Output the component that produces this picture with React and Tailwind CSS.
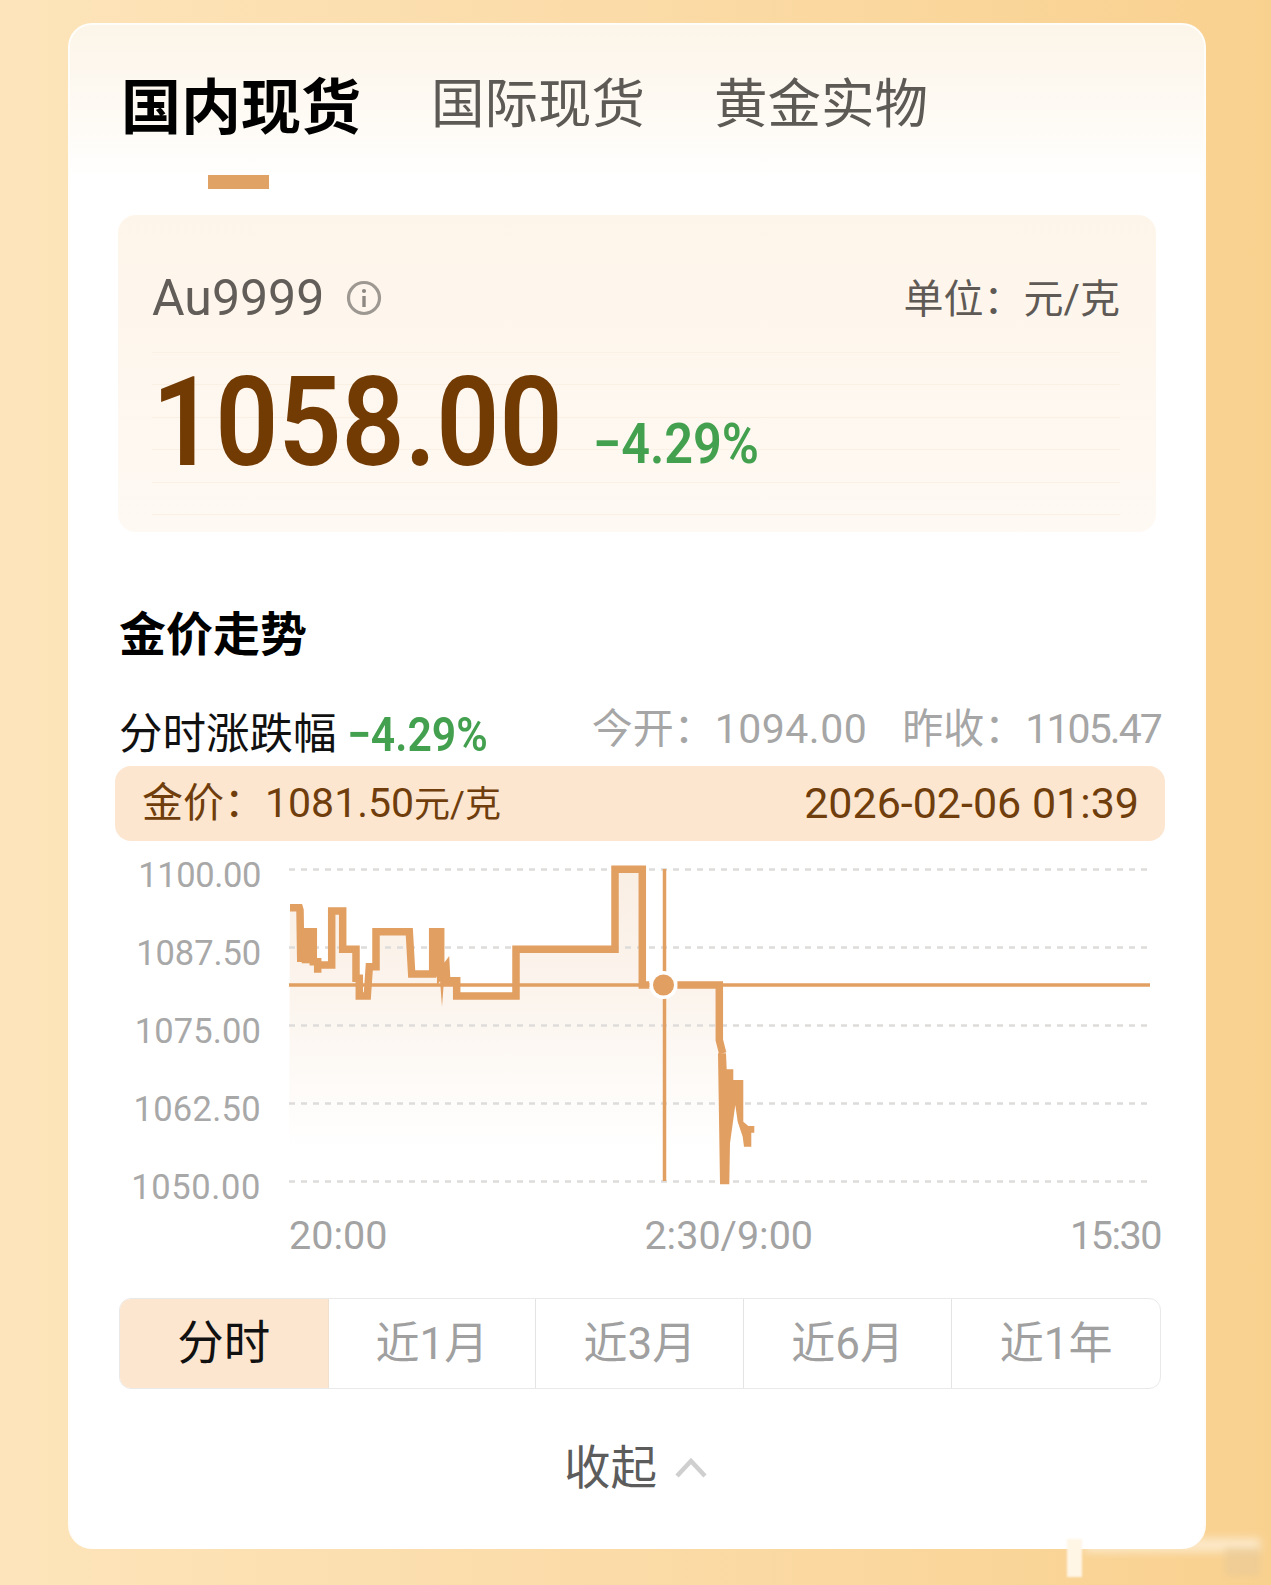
const FONT = "font-['Roboto','Noto_Sans_CJK_SC',sans-serif]";

const z4 = ([x, y]) => [270 + x / 3, 850 + y / 3];
const z5 = ([x, y]) => [590 + x / 3, 850 + y / 3];
const toD = (pts) => pts.map((p, i) => `${i ? "L" : "M"}${p[0].toFixed(1)} ${p[1].toFixed(1)}`).join(" ");

const left = [[60,173],[88,173],[90,180],[92,325],[106,325],[106,245],[130,245],[130,335],[143,335],[143,368],[143,345],[185,345],[185,183],[218,183],[218,298],[258,298],[258,385],[268,385],[268,438],[292,438],[298,350],[318,350],[318,245],[418,245],[425,372],[488,372],[488,245],[512,245],[512,372],[528,350],[530,392],[560,392],[560,438],[738,438],[738,298]].map(z4);
const mid = [[75,298],[75,58],[157,58],[157,405],[178,405]].map(z5);
const right = [[262,405],[388,405],[388,570],[398,610]].map(z5);
const fall = [[384,610],[408,610],[410,658],[430,658],[430,690],[460,690],[460,815],[475,828],[493,828],[493,848],[484,848],[484,890],[462,890],[458,860],[443,815],[436,765],[420,880],[418,1003],[390,1003]].map(z5);
const block1 = [[478,240],[522,240],[522,380],[478,380]].map(z4);
const block2 = [[95,240],[140,240],[140,340],[95,340]].map(z4);
const spike = [[509,378],[523,378],[516,470]].map(z4);
const area = [...left, ...mid, ...right, [718, 1181], [289, 1181]];

function Chart() {
  const grid = [869.5, 947.5, 1025.5, 1103.5, 1181.5];
  return (
    <svg width="905" height="360" viewBox="261 850 905 360" className="block shrink-0">
      <defs>
        <linearGradient id="fade" gradientUnits="userSpaceOnUse" x1="0" y1="869" x2="0" y2="1150">
          <stop offset="0" stopColor="#e09e5f" stopOpacity="0.17" />
          <stop offset="0.45" stopColor="#e09e5f" stopOpacity="0.11" />
          <stop offset="1" stopColor="#e09e5f" stopOpacity="0" />
        </linearGradient>
      </defs>
      <path d={toD(area) + " Z"} fill="url(#fade)" />
      {grid.map((y) => (
        <line key={y} x1="289" x2="1147" y1={y} y2={y} stroke="#dedcda" strokeWidth="2.5" strokeDasharray="6 6" />
      ))}
      <line x1="289" x2="1150" y1="985" y2="985" stroke="#e29f62" strokeWidth="3.5" />
      <line x1="664.5" x2="664.5" y1="869" y2="1181" stroke="#e29f62" strokeWidth="3.5" />
      <g fill="none" stroke="#e29f62" strokeWidth="7.5" strokeLinejoin="miter">
        <path d={toD(left) + " " + toD(mid).replace("M", "L")} />
        <path d={toD(right)} />
      </g>
      <path d={toD(fall) + " Z"} fill="#e29f62" />
      <path d={toD(block1) + " Z"} fill="#e29f62" />
      <path d={toD(block2) + " Z"} fill="#e29f62" />
      <path d={toD(spike) + " Z"} fill="#e29f62" />
      <circle cx="663.5" cy="985" r="14" fill="#fff" />
      <circle cx="663.5" cy="985" r="10.5" fill="#e29f62" />
    </svg>
  );
}

function InfoIcon() {
  return (
    <svg width="36" height="36" viewBox="0 0 36 36" fill="none">
      <circle cx="18" cy="18" r="15.5" stroke="#9d9892" strokeWidth="3.2" />
      <circle cx="18" cy="11" r="2.1" fill="#8d8882" />
      <path d="M18 16v11" stroke="#8d8882" strokeWidth="3.4" />
    </svg>
  );
}

const yLabels = [
  ["1100.00", "tracking-[-0.4px]"],
  ["1087.50", "tracking-[-0.1px]"],
  ["1075.00", "tracking-[0.1px]"],
  ["1062.50", "tracking-[0.3px]"],
  ["1050.00", "tracking-[0.6px]"],
];
const ranges = ["近1月", "近3月", "近6月", "近1年"];

export default function App() {
  return (
    <div className={`${FONT} relative w-[1271px] h-[1585px] overflow-hidden pt-[23px] pl-[68px] bg-[linear-gradient(90deg,#fde4ba_0%,#fbdca9_45%,#f9d18f_100%)]`}>
      <div className="w-[1138px] h-[1526px] box-border border-2 border-b-0 border-[#fffdf9] rounded-[24px] pl-[49px] pr-[43px] bg-[linear-gradient(180deg,#fcf5e9_0px,#fefaf4_90px,#ffffff_155px)]">
        {/* Tabs */}
        <div className="flex items-start gap-[69px] pl-[2px] pt-[54px]">
          <div className="text-[60px] leading-[60px] font-bold text-black">国内现货</div>
          <div className="text-[53.5px] leading-[60px] text-[#5d5a56] -mt-[4px] ml-px">国际现货</div>
          <div className="text-[53.5px] leading-[60px] text-[#5d5a56] -mt-[4px]">黄金实物</div>
        </div>
        <div className="w-[61px] h-[14px] mt-[36px] ml-[89px] bg-[#e1a266]" />

        {/* Price panel */}
        <div className="relative -ml-px w-[1038px] h-[317px] mt-[26px] rounded-[18px] pt-[53px] pl-[34px] pr-[36px] bg-[linear-gradient(180deg,#fef5ea_0%,#fef9f3_100%)]">
          <div className="absolute left-[34px] right-[36px] top-[137px]">
            {[0, 1, 2, 3, 4, 5].map((i) => (
              <div key={i} className="h-[32.4px] border-t border-[#fbf0e4]" />
            ))}
          </div>
          <div className="relative flex items-center justify-between h-[60px]">
            <div className="flex items-center gap-[22px]">
              <span className="text-[50px] leading-[60px] text-[#625d58]">Au9999</span>
              <InfoIcon />
            </div>
            <span className="text-[40px] leading-[60px] text-[#5f5a55] mt-[4px]">单位：元/克</span>
          </div>
          <div className="relative flex items-baseline mt-[45px] h-[100px]">
            <div className="w-[441px] text-[125px] leading-[100px] font-semibold text-[#733b04] scale-x-[0.885] origin-left whitespace-nowrap">1058.00</div>
            <div className="text-[56px] leading-[100px] font-semibold text-[#43a04e] scale-x-[0.9] origin-left whitespace-nowrap -translate-y-[2px]">−4.29%</div>
          </div>
        </div>

        {/* Trend */}
        <div className="mt-[79px] text-[47px] leading-[48px] font-semibold text-black">金价走势</div>
        <div className="flex items-start justify-between mt-[47px] h-[48px]">
          <div className="flex items-center gap-[10px] mt-[5px] h-[48px]">
            <span className="text-[43.5px] text-[#111111]">分时涨跌幅</span>
            <span className="text-[48px] font-semibold text-[#43a04e] scale-x-[0.89] origin-left whitespace-nowrap">−4.29%</span>
          </div>
          <div className="flex items-center gap-[35px] h-[44px] mt-[2px] text-[41px] text-[#a6a6a6]">
            <span>今开：<span className="tracking-[0.5px]">1094.00</span></span>
            <span>昨收：<span className="tracking-[-1.9px]">1105.47</span></span>
          </div>
        </div>

        {/* Tooltip bar */}
        <div className="flex items-center justify-between -ml-[4px] w-[1050px] h-[75px] mt-[12px] pl-[27px] pr-[26px] rounded-[16px] bg-[#fde6d0] text-[41px] text-[#6f3e0c]">
          <span>金价：1081.50<span className="text-[36px]">元/克</span></span>
          <span className="text-[43px]">2026-02-06 01:39</span>
        </div>

        {/* Chart */}
        <div className="flex mt-[9px] h-[360px]">
          <div className="flex flex-col justify-between shrink-0 w-[142px] h-[352px] mt-[5px]">
            {yLabels.map(([l, t]) => (
              <div key={l} className={`h-[40px] leading-[40px] text-right text-[34.5px] text-[#a8a8a8] ${t}`}>{l}</div>
            ))}
          </div>
          <Chart />
        </div>
        <div className="flex justify-between ml-[170px] mt-[6px] h-[40px] leading-[40px] text-[39.5px] text-[#a3a3a3]">
          <span>20:00</span>
          <span>2:30/9:00</span>
          <span className="tracking-[-1.5px]">15:30</span>
        </div>

        {/* Range selector */}
        <div className="grid grid-cols-[208.5px_repeat(4,1fr)] h-[91px] mt-[42px] rounded-[12px] border border-[#e9e9e9] overflow-hidden">
          <div className="flex items-center justify-center bg-[#fde6d0] text-[46.5px] text-[#111111] border-r border-[#f0e0d0]">分时</div>
          {ranges.map((r, i) => (
            <div key={r} className={`flex items-center justify-center text-[44px] text-[#a0a0a0] ${i < 3 ? "border-r border-[#e4e4e4]" : ""}`}>{r}</div>
          ))}
        </div>

        {/* Collapse */}
        <div className="flex items-center justify-center gap-[18px] mt-[59px] mr-[9px] h-[40px]">
          <span className="text-[46.5px] leading-[40px] text-[#5c5c5c]">收起</span>
          <svg width="32" height="20" viewBox="0 0 32 20" fill="none">
            <path d="M2 18L16 3l14 15" stroke="#cfcfcf" strokeWidth="4.5" />
          </svg>
        </div>
      </div>

      {/* Blurred watermark */}
      <div className="absolute left-[1067px] top-[1539px] w-[15px] h-[38px] bg-[#fff6e6] blur-[1px]" />
      <div className="absolute left-[1085px] top-[1538px] w-[175px] h-[14px] bg-white/50 blur-[4px]" />
      <div className="absolute left-[1225px] top-[1548px] w-[35px] h-[28px] bg-[#e8c997]/60 blur-[3px]" />
    </div>
  );
}
